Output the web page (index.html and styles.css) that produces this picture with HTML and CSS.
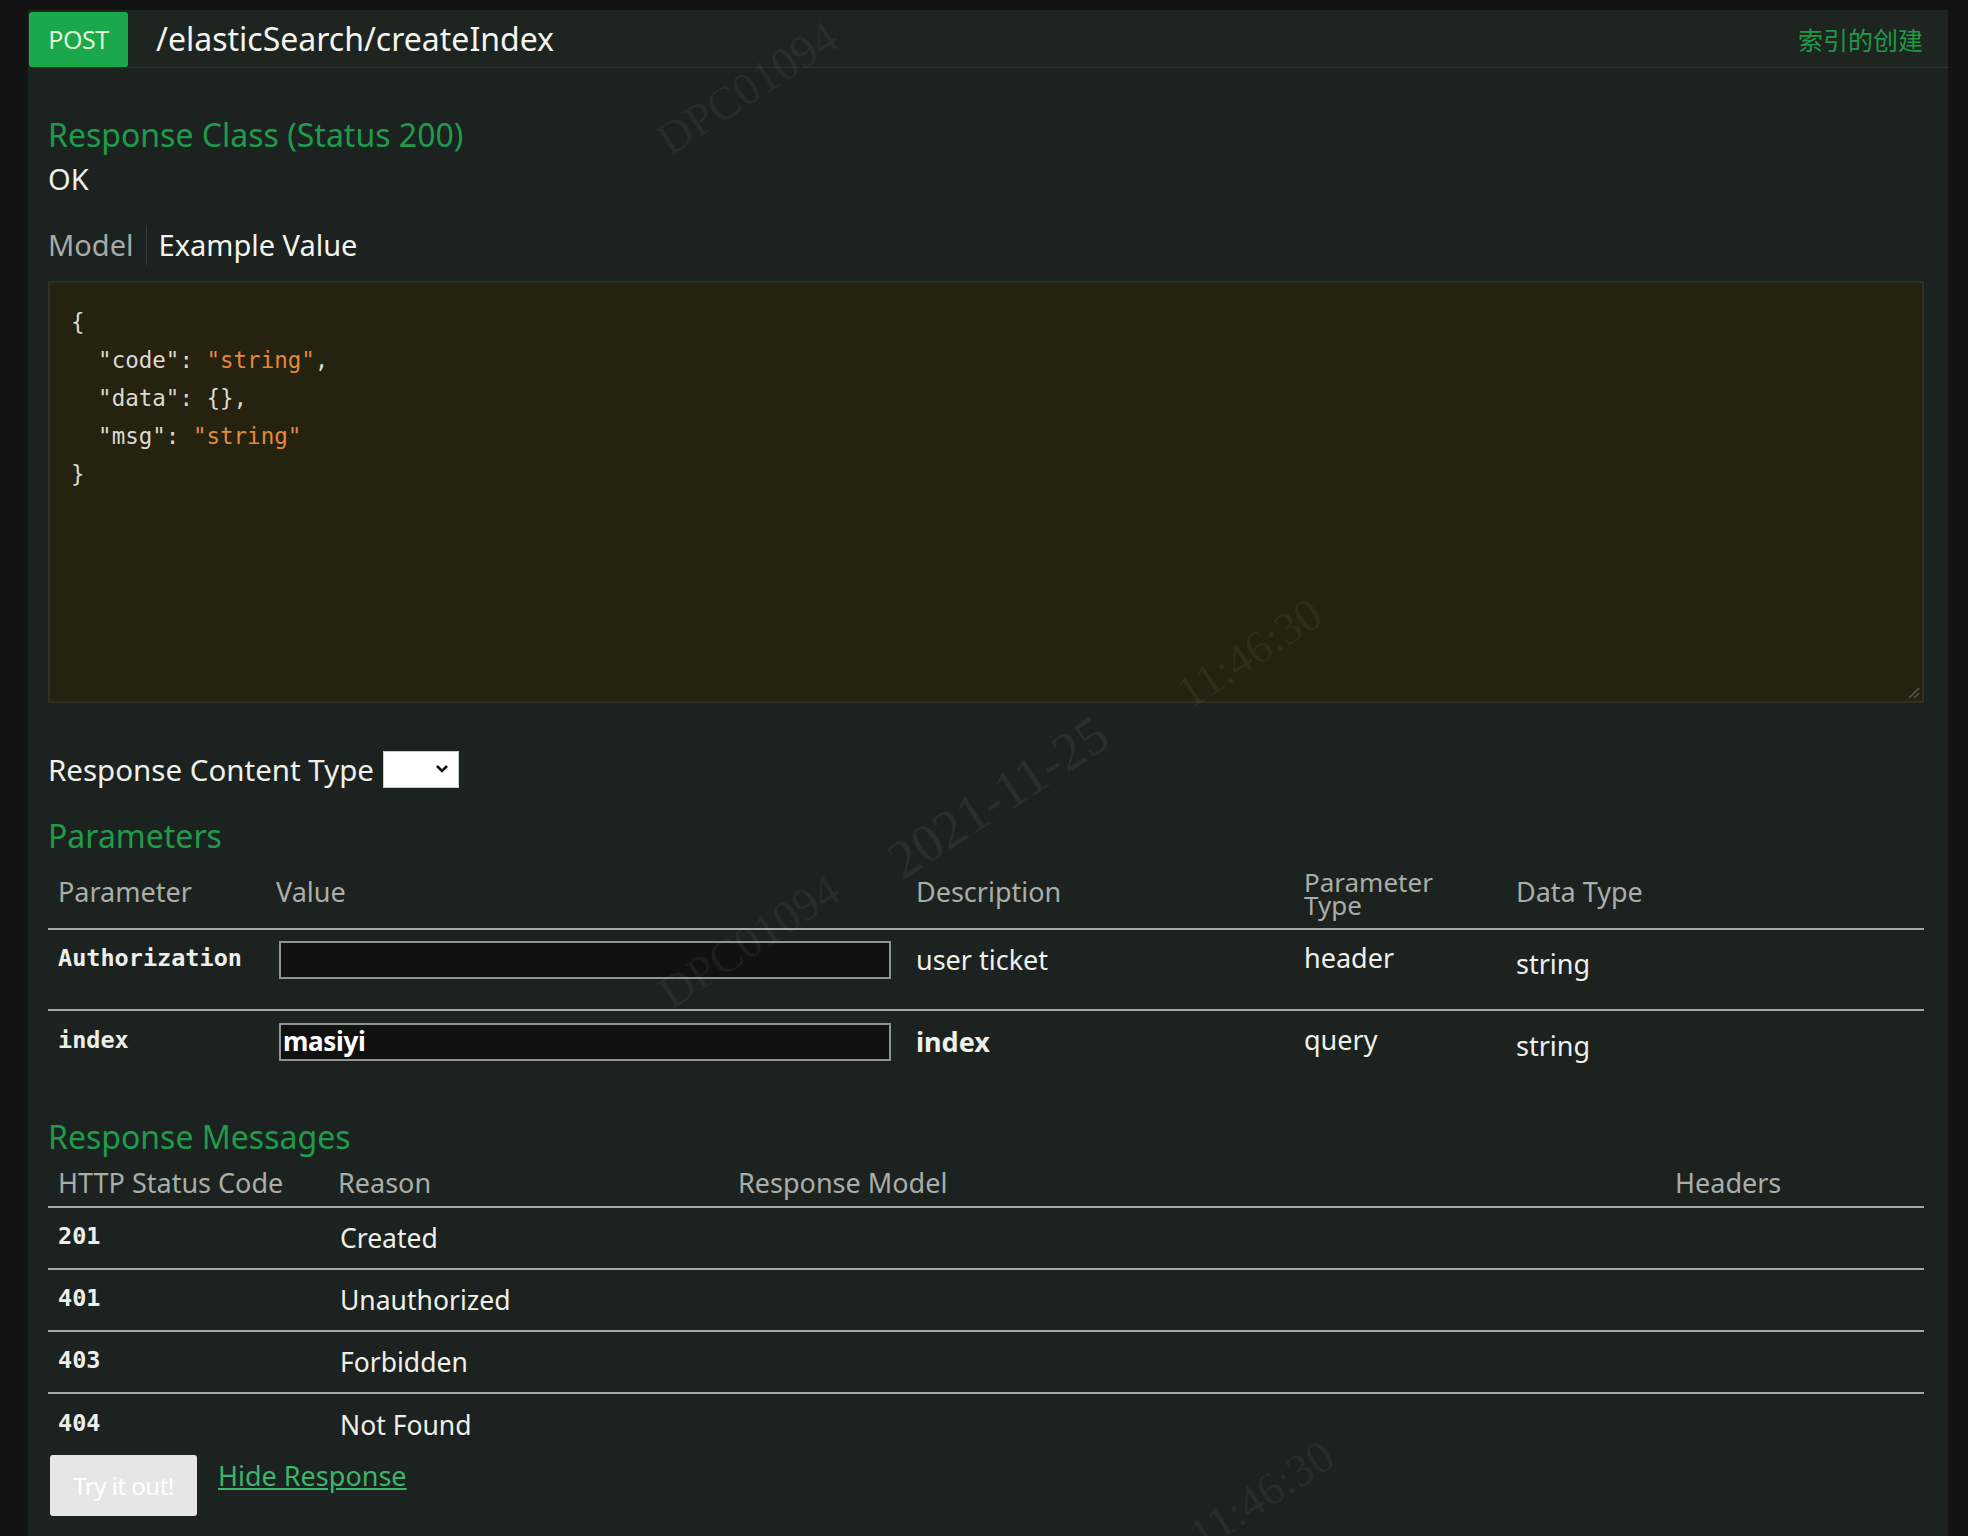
FILE: index.html
```html
<!DOCTYPE html>
<html lang="zh-CN">
<head>
<meta charset="utf-8">
<title>createIndex</title>
<link rel="stylesheet" href="styles.css">
</head>
<body>
<div class="wrap">
  <div class="op">
    <div class="op-head">
      <span class="badge">POST</span>
      <span class="path">/elasticSearch/createIndex</span>
      <span class="summary">索引的创建</span>
    </div>
    <div class="op-body">
      <h4 class="h-green h-class">Response Class (Status 200)</h4>
      <div class="ok">OK</div>
      <div class="tabs">
        <span class="tab tab-model">Model</span>
        <span class="tab tab-active">Example Value</span>
      </div>
      <div class="code">
<pre class="json">{
  <span class="k">"code"</span>: <span class="s">"string"</span>,
  <span class="k">"data"</span>: {},
  <span class="k">"msg"</span>: <span class="s">"string"</span>
}</pre>
        <svg class="grip" width="14" height="14" viewBox="0 0 14 14"><path d="M13 3 L3 13 M13 8 L8 13" stroke="#5a5a4a" stroke-width="1.5"/></svg>
      </div>
      <div class="rct">
        <span class="rct-label">Response Content Type</span>
        <span class="select"><svg width="16" height="12" viewBox="0 0 16 12"><path d="M3 3 L8 8 L13 3" fill="none" stroke="#111" stroke-width="2.6"/></svg></span>
      </div>
      <h4 class="h-green h-params">Parameters</h4>
      <table class="ptable">
        <colgroup><col class="c1"><col class="c2"><col class="c3"><col class="c4"><col class="c5"></colgroup>
        <thead>
          <tr>
            <th class="first">Parameter</th>
            <th>Value</th>
            <th>Description</th>
            <th class="two">Parameter<br>Type</th>
            <th>Data Type</th>
          </tr>
        </thead>
        <tbody>
          <tr class="r1">
            <td class="first mono">Authorization</td>
            <td><span class="input"></span></td>
            <td class="desc">user ticket</td>
            <td class="ptype">header</td>
            <td class="dtype">string</td>
          </tr>
          <tr class="r2">
            <td class="first mono">index</td>
            <td><span class="input filled">masiyi</span></td>
            <td class="desc strong">index</td>
            <td class="ptype">query</td>
            <td class="dtype">string</td>
          </tr>
        </tbody>
      </table>
      <h4 class="h-green h-msgs">Response Messages</h4>
      <table class="rtable">
        <colgroup><col class="d1"><col class="d2"><col class="d3"><col class="d4"></colgroup>
        <thead>
          <tr>
            <th class="first">HTTP Status Code</th>
            <th>Reason</th>
            <th>Response Model</th>
            <th>Headers</th>
          </tr>
        </thead>
        <tbody>
          <tr><td class="first mono">201</td><td class="reason">Created</td><td></td><td></td></tr>
          <tr><td class="first mono">401</td><td class="reason">Unauthorized</td><td></td><td></td></tr>
          <tr><td class="first mono">403</td><td class="reason">Forbidden</td><td></td><td></td></tr>
          <tr class="last"><td class="first mono">404</td><td class="reason">Not Found</td><td></td><td></td></tr>
        </tbody>
      </table>
      <div class="actions">
        <span class="btn">Try it out!</span>
        <a class="hide" href="#">Hide Response</a>
      </div>
    </div>
    <span class="wm wm1">DPC01094</span>
    <span class="wm wm2">11:46:30</span>
    <span class="wm wm3">2021-11-25</span>
    <span class="wm wm4">DPC01094</span>
    <span class="wm wm5">11:46:30</span>
  </div>
</div>
</body>
</html>
```
FILE: styles.css
```css
html, body {
  margin: 0;
  padding: 0;
  background: #121312;
  height: 1536px;
  overflow: hidden;
}
body {
  font-family: "Noto Sans", "Open Sans", "Noto Sans CJK SC", sans-serif;
  color: #f0f0ea;
}
.wrap {
  padding: 10px 20px 0 28px;
}
.op {
  position: relative;
  background: #1c221f;
  height: 1526px;
  overflow: hidden;
}
.op-head {
  display: flex;
  align-items: center;
  height: 57px;
  background: #1e2420;
  border-bottom: 1px solid #2b322d;
  padding-left: 1px;
}
.badge {
  align-self: flex-start;
  margin-top: 2px;
  width: 99px;
  height: 55px;
  background: #1aa84b;
  border-radius: 3px;
  color: #dff3d8;
  font-size: 25px;
  line-height: 55px;
  text-align: center;
  letter-spacing: -0.5px;
}
.path {
  margin-left: 28px;
  font-size: 32px;
  color: #f4f4f0;
}
.summary {
  margin-left: auto;
  margin-right: 25px;
  font-family: "Noto Sans CJK SC", sans-serif;
  font-size: 25px;
  color: #1d9a48;
}
.op-body {
  padding: 0 24px 0 20px;
}
.h-green {
  margin: 0;
  font-weight: normal;
  color: #1f9c4b;
  font-size: 32px;
  line-height: 40px;
}
.h-class { margin-top: 47px; }
.ok {
  margin-top: 4px;
  font-size: 29px;
  line-height: 40px;
}
.tabs {
  margin-top: 26px;
  display: flex;
  height: 40px;
  align-items: center;
  font-size: 29px;
}
.tab { line-height: 40px; }
.tab-model {
  color: #a6aba7;
  padding-right: 12px;
  border-right: 1px solid #3a403c;
}
.tab-active {
  padding-left: 12px;
  color: #f4f4ee;
}
.code {
  position: relative;
  margin-top: 16px;
  height: 418px;
  background: #25220f;
  border: 2px solid #303126;
}
.json {
  margin: 0;
  padding: 20px 0 0 21px;
  font-family: "DejaVu Sans Mono", "Liberation Mono", monospace;
  font-size: 22.5px;
  line-height: 38px;
  color: #dcdad0;
}
.json .s { color: #e3893b; }
.json .k { color: #dcdad0; }
.grip {
  position: absolute;
  right: 2px;
  bottom: 2px;
}
.rct {
  margin-top: 46px;
  height: 40px;
  display: flex;
  align-items: center;
}
.rct-label {
  font-size: 29.5px;
}
.select {
  margin-left: 9px;
  width: 76px;
  height: 37px;
  background: #fff;
  border: 1px solid #ccc;
  box-sizing: border-box;
  display: flex;
  align-items: center;
  justify-content: flex-end;
  padding-right: 8px;
}
.h-params { margin-top: 27px; }
table {
  border-collapse: collapse;
  table-layout: fixed;
  width: 100%;
}
th, td {
  padding: 0 0 0 8px;
  text-align: left;
  font-weight: normal;
}
th {
  color: #a9aea9;
  font-size: 27px;
}
.first { padding-left: 10px; }
.c1 { width: 220px; }
.c2 { width: 640px; }
.c3 { width: 388px; }
.c4 { width: 212px; }
.ptable thead tr {
  height: 73px;
  border-bottom: 2px solid #a4aba5;
}
.ptable th { vertical-align: middle; line-height: 30px; }
.ptable th.two { line-height: 23px; padding-top: 4px; font-size: 26px; }
.ptable td {
  vertical-align: top;
  padding-top: 11px;
  font-size: 27px;
  line-height: 38px;
}
.ptable .r1 { height: 81px; border-bottom: 2px solid #a4aba5; }
.ptable .r2 { height: 87px; }
.ptable .r2 td { padding-top: 12px; }
table td.mono {
  font-family: "DejaVu Sans Mono", "Liberation Mono", monospace;
  font-weight: bold;
  font-size: 23.5px;
  color: #eeeeea;
}
.ptable td.mono { line-height: 34px; }
.input {
  display: block;
  margin-left: 3px;
  width: 612px;
  height: 38px;
  box-sizing: border-box;
  background: #101110;
  border: 2px solid #8f948f;
  font-size: 26px;
  font-weight: bold;
  line-height: 33px;
  padding-left: 2px;
  color: #fff;
  letter-spacing: -0.3px;
}
.desc { color: #f0f0ea; }
.desc.strong { font-weight: bold; }
.ptable td.ptype { color: #f0f0ea; line-height: 34px; }
.ptable td.dtype { padding-top: 15px; }
.ptable .r2 td.dtype { padding-top: 16px; }
.h-msgs { margin-top: 20px; }
.d1 { width: 282px; }
.d2 { width: 400px; }
.d3 { width: 937px; }
.rtable thead tr {
  height: 50px;
  border-bottom: 2px solid #a4aba5;
}
.rtable th {
  vertical-align: bottom;
  padding-bottom: 8px;
  line-height: 30px;
}
.rtable tbody tr {
  height: 62px;
  border-bottom: 2px solid #a4aba5;
}
.rtable tbody tr.last { border-bottom: none; }
.rtable td { vertical-align: middle; }
.rtable td.mono { padding-bottom: 4px; }
.rtable td.reason {
  font-size: 26.5px;
  color: #f0f0ea;
  padding-left: 10px;
}
.actions {
  display: flex;
  align-items: flex-start;
}
.btn {
  margin-left: 2px;
  width: 147px;
  height: 61px;
  background: #e6e7e5;
  border-radius: 3px;
  color: #ffffff;
  font-size: 24px;
  line-height: 61px;
  text-align: center;
  letter-spacing: -0.5px;
}
.hide {
  margin-left: 21px;
  margin-top: 4px;
  font-size: 27px;
  line-height: 34px;
  color: #3db56a;
  text-decoration: underline;
}
.wm {
  position: absolute;
  font-family: "Liberation Serif", serif;
  font-size: 46px;
  color: rgba(220, 225, 220, 0.07);
  transform: translate(-50%, -50%) rotate(-33deg);
  white-space: nowrap;
  pointer-events: none;
}
.wm1 { left: 719px; top: 78px; }
.wm2 { left: 1221px; top: 643px; }
.wm3 { left: 970px; top: 787px; font-size: 54px; }
.wm4 { left: 721px; top: 931px; }
.wm5 { left: 1233px; top: 1485px; }
```
